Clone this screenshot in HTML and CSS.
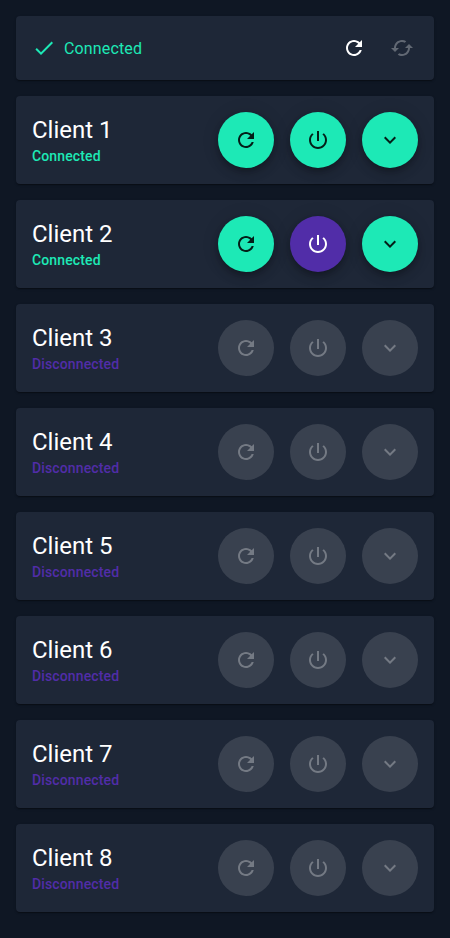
FILE: index.html
```
<!DOCTYPE html>
<html lang="en">
<head>
<meta charset="utf-8">
<title>Clients</title>
<link rel="stylesheet" href="styles.css">
</head>
<body>
<svg class="sprite" aria-hidden="true">
  <symbol id="check" viewBox="0 0 24 24"><path d="M9 16.17L4.83 12l-1.42 1.41L9 19 21 7l-1.41-1.41z"/></symbol>
  <symbol id="refresh" viewBox="0 0 24 24"><path d="M17.65 6.35C16.2 4.9 14.21 4 12 4c-4.42 0-7.99 3.58-7.99 8s3.57 8 7.99 8c3.73 0 6.84-2.55 7.73-6h-2.08c-.82 2.33-3.04 4-5.65 4-3.31 0-6-2.69-6-6s2.69-6 6-6c1.66 0 3.14.69 4.22 1.78L13 11h7V4l-2.35 2.35z"/></symbol>
  <symbol id="cached" viewBox="0 0 24 24"><path d="M19 8l-4 4h3c0 3.31-2.69 6-6 6-1.01 0-1.97-.25-2.8-.7l-1.46 1.46C8.97 19.54 10.43 20 12 20c4.42 0 8-3.58 8-8h3l-4-4zM6 12c0-3.31 2.69-6 6-6 1.01 0 1.97.25 2.8.7l1.46-1.46C15.03 4.46 13.57 4 12 4c-4.42 0-8 3.58-8 8H1l4 4 4-4H6z"/></symbol>
  <symbol id="power" viewBox="0 0 24 24"><path d="M13 3h-2v10h2V3zm4.83 2.17l-1.42 1.42C17.99 7.86 19 9.81 19 12c0 3.87-3.13 7-7 7s-7-3.13-7-7c0-2.19 1.01-4.14 2.58-5.42L6.17 5.17C4.23 6.82 3 9.26 3 12c0 4.97 4.03 9 9 9s9-4.03 9-9c0-2.74-1.23-5.18-3.17-6.83z"/></symbol>
  <symbol id="expand" viewBox="0 0 24 24"><path d="M16.59 8.59L12 13.17 7.41 8.59 6 10l6 6 6-6z"/></symbol>
</svg>
<main class="list" id="list">
  <header class="card status">
    <svg class="icon"><use href="#check"/></svg>
    <span class="status-text">Connected</span>
    <button class="icon-button"><svg class="icon"><use href="#refresh"/></svg></button>
    <button class="icon-button" disabled><svg class="icon"><use href="#cached"/></svg></button>
  </header>
</main>
<script src="app.js"></script>
</body>
</html>
```
FILE: styles.css
```
* { box-sizing: border-box; }

body {
  margin: 0;
  background: #0f1724;
  color: #fff;
  font-family: Roboto, "Liberation Sans", sans-serif;
}

.sprite { display: none; }

.list {
  display: flex;
  flex-direction: column;
  gap: 16px;
  padding: 16px;
}

.card {
  display: flex;
  align-items: center;
  padding: 16px;
  border-radius: 4px;
  background: #1e2737;
  box-shadow: 0 2px 1px -1px rgba(0, 0, 0, .2), 0 1px 1px rgba(0, 0, 0, .14), 0 1px 3px rgba(0, 0, 0, .12);
}

.status {
  height: 64px;
  padding: 8px 8px 8px 16px;
  color: #1de9b6;
}

.status-text {
  flex: 1;
  margin-left: 8px;
  padding-top: 2px;
  font-size: 16px;
  line-height: 24px;
  letter-spacing: .15px;
}

.icon {
  display: block;
  width: 24px;
  height: 24px;
  fill: currentColor;
}

button {
  border: 0;
  padding: 0;
  display: flex;
  align-items: center;
  justify-content: center;
  border-radius: 50%;
}

.icon-button {
  width: 48px;
  height: 48px;
  background: none;
  color: #fff;
}

.icon-button:disabled { color: rgba(255, 255, 255, .3); }

.client { height: 88px; }

.info { flex: 1; }

.name {
  margin: 0;
  font-size: 24px;
  font-weight: 400;
  line-height: 32px;
}

.state {
  margin: 0;
  font-size: 14px;
  font-weight: 500;
  line-height: 20px;
  letter-spacing: .13px;
  color: #512da8;
}

.state.connected { color: #1de9b6; }

.actions {
  display: flex;
  gap: 16px;
}

.fab {
  width: 56px;
  height: 56px;
  background: #1de9b6;
  color: rgba(0, 0, 0, .87);
  box-shadow: 0 3px 5px -1px rgba(0, 0, 0, .2), 0 6px 10px rgba(0, 0, 0, .14), 0 1px 18px rgba(0, 0, 0, .12);
}

.fab.secondary {
  background: #512da8;
  color: #fff;
}

.fab:disabled {
  background: rgba(255, 255, 255, .12);
  color: rgba(255, 255, 255, .3);
  box-shadow: none;
}
```
FILE: app.js
```
const clients = [1, 2, 3, 4, 5, 6, 7, 8].map((id) => ({
  id,
  connected: id <= 2,
  secondary: id === 2,
}));

document.getElementById("list").insertAdjacentHTML("beforeend", clients.map((c) => {
  const button = (icon, extra = "") =>
    `<button class="fab ${extra}" ${c.connected ? "" : "disabled"}><svg class="icon"><use href="#${icon}"/></svg></button>`;
  return `<section class="card client">
    <div class="info">
      <h2 class="name">Client ${c.id}</h2>
      <p class="state ${c.connected ? "connected" : ""}">${c.connected ? "Connected" : "Disconnected"}</p>
    </div>
    <div class="actions">${button("refresh")}${button("power", c.secondary ? "secondary" : "")}${button("expand")}</div>
  </section>`;
}).join(""));
```
